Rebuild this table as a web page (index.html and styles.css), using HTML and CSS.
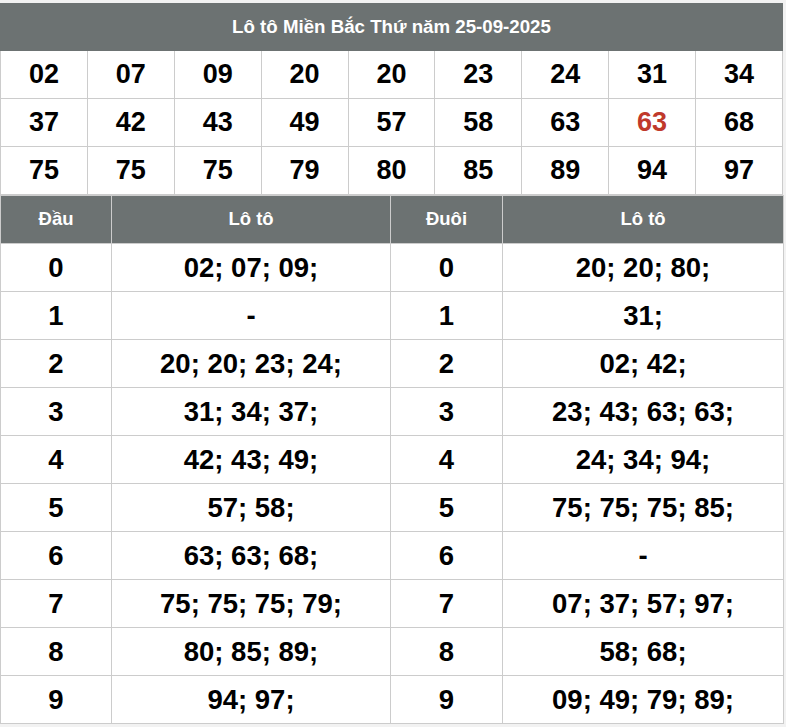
FILE: index.html
```html
<!DOCTYPE html>
<html lang="vi">
<head>
<meta charset="utf-8">
<title>Lô tô Miền Bắc</title>
<link rel="stylesheet" href="styles.css">
</head>
<body>
<div class="wrap">
  <table class="nums">
    <tr><th colspan="9" class="title">Lô tô Miền Bắc Thứ năm 25-09-2025</th></tr>
    <tr><td>02</td><td>07</td><td>09</td><td>20</td><td>20</td><td>23</td><td>24</td><td>31</td><td>34</td></tr>
    <tr><td>37</td><td>42</td><td>43</td><td>49</td><td>57</td><td>58</td><td>63</td><td class="red">63</td><td>68</td></tr>
    <tr><td>75</td><td>75</td><td>75</td><td>79</td><td>80</td><td>85</td><td>89</td><td>94</td><td>97</td></tr>
  </table>
  <table class="dd">
    <colgroup><col class="c1"><col class="c2"><col class="c3"><col class="c4"></colgroup>
    <tr><th>Đầu</th><th>Lô tô</th><th>Đuôi</th><th>Lô tô</th></tr>
    <tr><td>0</td><td>02; 07; 09;</td><td>0</td><td>20; 20; 80;</td></tr>
    <tr><td>1</td><td>-</td><td>1</td><td>31;</td></tr>
    <tr><td>2</td><td>20; 20; 23; 24;</td><td>2</td><td>02; 42;</td></tr>
    <tr><td>3</td><td>31; 34; 37;</td><td>3</td><td>23; 43; 63; 63;</td></tr>
    <tr><td>4</td><td>42; 43; 49;</td><td>4</td><td>24; 34; 94;</td></tr>
    <tr><td>5</td><td>57; 58;</td><td>5</td><td>75; 75; 75; 85;</td></tr>
    <tr><td>6</td><td>63; 63; 68;</td><td>6</td><td>-</td></tr>
    <tr><td>7</td><td>75; 75; 75; 79;</td><td>7</td><td>07; 37; 57; 97;</td></tr>
    <tr><td>8</td><td>80; 85; 89;</td><td>8</td><td>58; 68;</td></tr>
    <tr><td>9</td><td>94; 97;</td><td>9</td><td>09; 49; 79; 89;</td></tr>
  </table>
</div>
</body>
</html>
```
FILE: styles.css
```css
html, body {
  margin: 0;
  padding: 0;
  background: #f2f2f2;
}
body {
  font-family: "Liberation Sans", Arial, sans-serif;
  padding-top: 3px;
}
.wrap {
  width: 783px;
  background: #fff;
}
table {
  width: 783px;
  border-collapse: collapse;
  table-layout: fixed;
}
td, th {
  border: 1px solid #cccccc;
  text-align: center;
  padding: 0;
  line-height: 1;
}
.title {
  background: #6c7272;
  color: #fff;
  font-size: 18.7px;
  font-weight: bold;
  height: 46px;
  border-color: #6c7272;
}
.nums td {
  height: 47px;
  font-size: 27px;
  font-weight: bold;
  color: #000;
}
.nums td.red {
  color: #c0392b;
}
.dd th {
  background: #6c7272;
  color: #fff;
  font-size: 18.5px;
  font-weight: bold;
  height: 47px;
  border-color: #cccccc;
}
.dd td {
  height: 47px;
  font-size: 27.5px;
  font-weight: bold;
  color: #000;
}
.c1 { width: 111px; }
.c2 { width: 279px; }
.c3 { width: 112px; }
.c4 { width: 281px; }
```
